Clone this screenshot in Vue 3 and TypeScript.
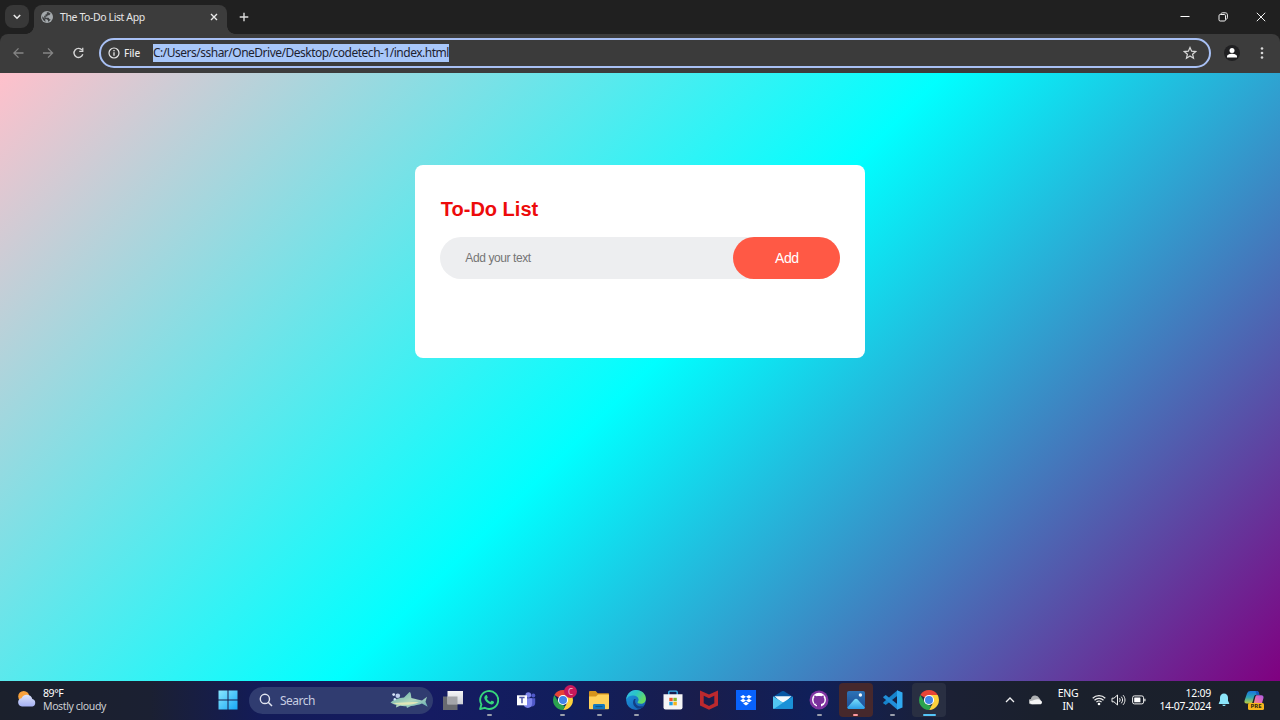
<script setup lang="ts">
import { ref } from 'vue'

const address = 'C:/Users/sshar/OneDrive/Desktop/codetech-1/index.html'
const draft = ref<string>('')
const tasks = ref<string[]>([])

function addTask(): void {
  const text = draft.value.trim()
  if (!text) return
  tasks.value.push(text)
  draft.value = ''
}
</script>

<template>
  <div class="screen">
    <header class="tabstrip">
      <button class="tab-search" aria-label="Search tabs">
        <svg width="24" height="23" viewBox="0 0 24 23"><path d="M8.8 10l3.2 3.2 3.2-3.2" fill="none" stroke="#e8e8e8" stroke-width="1.6" /></svg>
      </button>
      <div class="tab">
        <svg class="globe" width="12" height="12" viewBox="0 0 12 12">
          <circle cx="6" cy="6" r="6" fill="#a4a9ac" />
          <path d="M1.2 5.2l3 2.900v1.300l1 1.200C2.800 10.400 1 8.500 1.200 5.200zM5.800 1.300c1.700-.2 3 .5 3.800 1.500L8.300 4.200H6.700L6.200 5.600H4.600v1.200h3l.9 1.500h1.200C8.900 9.900 7.800 10.500 7 10.700V9.200L5.800 8.200H4.400L3.200 6.500V4.800h1.300V3.300h1.300z" fill="#3f4143" />
        </svg>
        <span class="tab-title">The To-Do List App</span>
        <svg class="tab-close" width="8" height="8" viewBox="0 0 8 8"><path d="M1 1l6 6M7 1L1 7" stroke="#e8e8e8" stroke-width="1.400" /></svg>
      </div>
      <svg class="plus" width="10" height="10" viewBox="0 0 10 10"><path d="M5 .7v8.600M.7 5h8.600" stroke="#dcdcdc" stroke-width="1.400" /></svg>
      <div class="window-controls">
        <svg width="10" height="10" viewBox="0 0 10 10"><path d="M.5 4.500h9" stroke="#fff" stroke-width="1" /></svg>
        <svg width="10" height="10" viewBox="0 0 10 10"><g fill="none" stroke="#f2f2f2"><rect x="1" y="2.500" width="6.500" height="6.500" rx="1.200" /><path d="M3 2.300C3 1.300 3.500.8 4.400.8h3c1.200 0 2 .8 2 2v3c0 .9-.6 1.400-1.500 1.400" /></g></svg>
        <svg width="10" height="10" viewBox="0 0 10 10"><path d="M.8.8l8.400 8.400M9.200.8L.8 9.200" stroke="#f2f2f2" stroke-width="1" /></svg>
      </div>
    </header>

    <nav class="toolbar">
      <svg class="nav-icon" width="12" height="12" viewBox="0 0 12 12"><path d="M11.500 6H1.700M6.500 1.400L1.900 6l4.600 4.600" fill="none" stroke="#858585" stroke-width="1.300" /></svg>
      <svg class="nav-icon" width="12" height="12" viewBox="0 0 12 12"><path d="M1 6h9.500M6 1.400L10.600 6 6 10.600" fill="none" stroke="#858585" stroke-width="1.300" /></svg>
      <svg class="nav-icon" width="12" height="12" viewBox="0 0 12 12"><path d="M10.800 7.300A4.500 4.500 0 1 1 10.100 3.200" fill="none" stroke="#d5d5d5" stroke-width="1.400" /><path d="M11.400.8v4.300H7.200V3.800h2.900V.8z" fill="#d5d5d5" /></svg>
      <div class="omnibox">
        <svg class="info" width="12" height="12" viewBox="0 0 12 12"><circle cx="6" cy="6" r="5" fill="none" stroke="#e8e8e8" stroke-width="1.200" /><path d="M6 5.200v3.500M6 3v1.300" stroke="#e8e8e8" stroke-width="1.300" /></svg>
        <span class="scheme">File</span>
        <span class="url">{{ address }}</span>
        <svg class="star" width="14" height="14" viewBox="0 0 14 14"><path d="M7 1.500l1.650 3.700 4 .35-3.050 2.650.92 3.950L7 10.050l-3.520 2.100.92-3.950L1.350 5.550l4-.35z" fill="none" stroke="#d8d8d8" stroke-width="1.200" /></svg>
      </div>
      <svg class="profile" width="16" height="16" viewBox="0 0 16 16"><circle cx="8" cy="8" r="8" fill="#202022" /><circle cx="8" cy="5.500" r="2.500" fill="#fff" /><path d="M3 12.600v-1.300c0-1.700 3-2.600 5-2.600s5 .9 5 2.600v1.300z" fill="#fff" /></svg>
      <svg class="kebab" width="4" height="14" viewBox="0 0 4 14"><g fill="#d8d8d8"><circle cx="2" cy="2.500" r="1.300" /><circle cx="2" cy="7" r="1.300" /><circle cx="2" cy="11.500" r="1.300" /></g></svg>
    </nav>

    <main class="page">
      <section class="todo-app">
        <h2>To-Do List</h2>
        <div class="row">
          <input v-model="draft" type="text" placeholder="Add your text" @keyup.enter="addTask" />
          <button @click="addTask">Add</button>
        </div>
        <ul v-if="tasks.length">
          <li v-for="(task, i) in tasks" :key="i">{{ task }}</li>
        </ul>
      </section>
    </main>

    <footer class="taskbar">
      <div class="weather">
        <svg width="20" height="18" viewBox="0 0 20 18">
          <defs><linearGradient id="cloud" x1="0" y1="0" x2="0" y2="1"><stop offset="0" stop-color="#dde4fb" /><stop offset="1" stop-color="#a5b0f3" /></linearGradient></defs>
          <circle cx="6.700" cy="6.500" r="5.500" fill="#f7a13c" />
          <path d="M5 16.500a4.200 4.200 0 0 1-.5-8.300 5.700 5.700 0 0 1 10.800.8 3.900 3.900 0 0 1 .2 7.500z" fill="url(#cloud)" />
        </svg>
        <div class="weather-text"><span>89°F</span><span class="dim">Mostly cloudy</span></div>
      </div>

      <svg class="start" width="20" height="20" viewBox="0 0 20 20">
        <defs><linearGradient id="win" x1="0" y1="0" x2="1" y2="1"><stop offset="0" stop-color="#8ae8ff" /><stop offset="1" stop-color="#16a6f5" /></linearGradient></defs>
        <path d="M.5.5h9v9h-9zM10.500.5h9v9h-9zM.5 10.500h9v9h-9zM10.500 10.500h9v9h-9z" fill="url(#win)" />
      </svg>

      <div class="search">
        <svg width="14" height="14" viewBox="0 0 14 14"><circle cx="5.900" cy="5.900" r="4.600" fill="#303c70" stroke="#e1e5f1" stroke-width="1.400" /><path d="M9.200 9.200l3.800 3.800" stroke="#e1e5f1" stroke-width="1.500" /></svg>
        <span>Search</span>
        <svg class="shark" width="38" height="18" viewBox="0 0 38 18">
          <defs><linearGradient id="shark" x1="0" y1="0" x2="1" y2="1"><stop offset="0" stop-color="#59a7a3" /><stop offset=".55" stop-color="#afd6be" /><stop offset="1" stop-color="#5faab4" /></linearGradient></defs>
          <path d="M.5 11.500c3-3 8-4.900 13.500-5L19.500 1c1.400 0 1.600 3.500 1.900 5.900 4.600.8 7.900 2.100 10.600 2.600l5-3.700-1.500 5 2.200 5-5.700-3.300c-3.500 1.300-7 2.200-11 2.500l-4 2-.6-1.800c-2.200.1-4.300 0-6.300-.4L6 16.500l.4-2.600C4 13.500 2.200 12.700.5 11.500z" fill="url(#shark)" />
          <path d="M3 12c7 .3 15-1.700 26-.7-5 2.200-10 2.700-16 2.500-4 0-7.500-.6-10-1.800z" fill="#e0e6b7" />
          <circle cx="4.800" cy="8.300" r="1.200" fill="#cde7fa" /><circle cx="7.800" cy="4.700" r="2.300" fill="#bfcdec" /><circle cx="3.700" cy="3.600" r="1.400" fill="#d8e6fa" />
        </svg>
      </div>

      <div class="apps">
        <div class="app">
          <svg viewBox="0 0 20 20"><defs><linearGradient id="tv" x1="0" y1="0" x2="0" y2="1"><stop offset="0" stop-color="#f5f5f7" /><stop offset="1" stop-color="#cbcdd5" /></linearGradient></defs><path d="M0 6.500h14.500V20H0z" fill="#686a70" /><path d="M4.500 1H20v13.300H4.500z" fill="url(#tv)" /><path d="M4.500 6.500h10v7.800h-10z" fill="#a3a4a9" /></svg>
        </div>
        <div class="app">
          <svg viewBox="0 0 20 20"><path d="M1.100 19l1.300-4.500A9 9 0 1 1 5.700 17.800z" fill="none" stroke="#36d67b" stroke-width="1.900" stroke-linejoin="round" /><path d="M6.800 5.200c.4-.2 1-.1 1.200.3l.7 1.700c.1.300 0 .6-.2.900l-.6.7c.8 1.500 1.800 2.400 3.400 3.100l.9-1c.2-.3.500-.3.800-.2l1.700.9c.4.200.4.500.3.900-.3 1.300-1.500 2-2.700 1.900-3.400-.4-6.600-3.500-7-6.300-.1-1.200.5-2.300 1.500-2.900z" fill="#36d67b" /></svg><i />
        </div>
        <div class="app">
          <svg viewBox="0 0 20 20"><circle cx="12.300" cy="5" r="2.800" fill="#7b83eb" /><circle cx="17.300" cy="5.600" r="2" fill="#5059c9" /><path d="M13.500 8.300h5.700v4.800c0 2-1.300 3.400-3.400 3.400h-2.300z" fill="#5059c9" /><path d="M7.500 8.300h8.600v5.200c0 2.500-1.700 4.400-4.300 4.400s-4.300-1.900-4.300-4.400z" fill="#7b83eb" /><path d="M1 5.300h10v10H1z" fill="#fff" /><path d="M3.300 7.600h5.300M6 7.600v5.600" stroke="#4c55a8" stroke-width="1.500" /></svg>
        </div>
        <div class="app">
          <svg viewBox="0 0 20 20"><path d="M10 10L1.340 5A10 10 0 0 1 18.660 5z" fill="#e84436" /><path d="M10 10V5h8.660A10 10 0 0 1 10 20l4.330-7.500z" fill="#fdd13b" /><path d="M1.340 5l4.330 7.500L10 15l2 1.500L10 20A10 10 0 0 1 1.340 5z" fill="#2ba34f" /><circle cx="10" cy="10" r="5.100" fill="#fff" /><circle cx="10" cy="10" r="4" fill="#4285e8" /></svg>
          <b class="badge">C</b><i />
        </div>
        <div class="app">
          <svg viewBox="0 0 20 20"><path d="M0 2.200c0-.7.5-1.200 1.200-1.200h5.500l2 2.200H19c.6 0 1 .4 1 1V10H0z" fill="#d6941c" /><path d="M0 6.500h7l2-2h10c.6 0 1 .4 1 1v12.700c0 .6-.4 1-1 1H1c-.6 0-1-.4-1-1z" fill="#ffd15a" /><path d="M4 19v-3.500c0-1 .6-1.500 1.500-1.500h9c.9 0 1.500.5 1.500 1.500V19z" fill="#1579bf" /><path d="M6.500 16.500h7" stroke="#0b588e" stroke-width="1.200" /></svg><i />
        </div>
        <div class="app">
          <svg viewBox="0 0 20 20"><defs><linearGradient id="edgeTop" x1="0" y1="0" x2="1" y2=".5"><stop offset="0" stop-color="#36b9ed" /><stop offset=".5" stop-color="#2ac6c5" /><stop offset="1" stop-color="#68db62" /></linearGradient><linearGradient id="edgeLow" x1="0" y1="0" x2="1" y2="1"><stop offset="0" stop-color="#1b9de2" /><stop offset="1" stop-color="#1657ae" /></linearGradient></defs><circle cx="10" cy="10" r="9.900" fill="url(#edgeLow)" /><path d="M.1 9.600C.8 4 4.800.1 10 .1c5.800 0 9.900 4 9.900 8.700 0 3.100-2.300 5-5 5-2.300 0-3.800-.9-3.300-1.700.9-1.200 1.100-2 .9-3C12 6.900 10 5.600 7.200 5.500 4 5.400 1.300 7 .1 9.600z" fill="url(#edgeTop)" /><path d="M8.200 9c-2 2.500-1.300 7 2.300 8.900 3 1.300 6.300.2 8.200-2.500-4 1.900-8.400.7-9.400-3-.3-1.300-.1-2.300.5-3.300z" fill="#123f86" /></svg><i />
        </div>
        <div class="app">
          <svg viewBox="0 0 20 20"><path d="M5.800 5V2.200c0-.7.4-1.100 1-1.100h6.400c.6 0 1 .4 1 1.100V5" fill="none" stroke="#36b4ee" stroke-width="1.400" /><path d="M.5 4.200h19v13.300a2 2 0 0 1-2 2h-15a2 2 0 0 1-2-2z" fill="#f5f5f6" /><path d="M6.300 7.800h3.400v3.400H6.300z" fill="#ef5428" /><path d="M10.400 7.800h3.400v3.400h-3.400z" fill="#83b82d" /><path d="M6.300 11.900h3.400v3.400H6.300z" fill="#20a2e2" /><path d="M10.400 11.900h3.400v3.400h-3.400z" fill="#f6b51c" /></svg>
        </div>
        <div class="app">
          <svg viewBox="0 0 20 20"><path d="M1 .4l9 4.200L19 .4v15L10 19.800 1 15.400zM4.700 5.700v7.500L10 16l5.300-2.800V5.700L10 8.300z" fill="#bc292e" fill-rule="evenodd" /></svg>
        </div>
        <div class="app">
          <svg viewBox="0 0 20 20"><path d="M0 0h20v20H0z" fill="#0862fb" /><path d="M7.100 5l2.900 1.850-2.900 1.850-2.900-1.850zM12.900 5l2.900 1.850-2.900 1.850L10 6.850zM7.100 8.700L10 10.550 7.100 12.400l-2.900-1.850zM12.900 8.700l2.900 1.850-2.900 1.850L10 10.550zM10 11.700l2.900 1.850L10 15.400l-2.900-1.850z" fill="#fff" /></svg>
        </div>
        <div class="app">
          <svg viewBox="0 0 20 20"><path d="M0 6.700L9 1.200c.7-.4 1.300-.4 2 0l9 5.500-10 7z" fill="#0757a4" /><path d="M1.500 6.300h17L10 14z" fill="#f4f9fd" /><path d="M0 6.500l20 12.300H1c-.6 0-1-.4-1-1z" fill="#2ca6e6" /><path d="M20 6.500v11.300c0 .6-.4 1-1 1H1L10 12.600z" fill="#1a91d7" /><path d="M0 6.500l10 6.200-9 6.100c-.6 0-1-.4-1-1z" fill="#52c6f1" /></svg>
        </div>
        <div class="app">
          <svg viewBox="0 0 20 20"><circle cx="10" cy="10" r="9.500" fill="#8034a2" /><circle cx="10" cy="9.800" r="7" fill="#fff" /><path d="M8 17v-3.100c-2.500-.4-3.500-1.600-3.500-4 0-.9.300-1.700.8-2.300-.2-.6-.2-1.400.1-2.200.8 0 1.600.4 2.300.9 1.500-.4 3.100-.4 4.600 0 .7-.5 1.500-.9 2.300-.9.300.8.300 1.600.1 2.200.5.600.8 1.400.8 2.300 0 2.400-1 3.600-3.500 4V17z" fill="#7a309c" /><path d="M5 12.700c1.400 0 1.100 1.800 3 1.800" fill="none" stroke="#7a309c" /></svg><i />
        </div>
        <div class="app photos">
          <svg viewBox="0 0 20 20"><defs><linearGradient id="ph" x1="0" y1="0" x2="0" y2="1"><stop offset="0" stop-color="#2c72b6" /><stop offset="1" stop-color="#1c4c94" /></linearGradient><linearGradient id="hill" x1="0" y1="0" x2="0" y2="1"><stop offset="0" stop-color="#7de0fb" /><stop offset="1" stop-color="#2a9ce7" /></linearGradient></defs><rect x="1" y="1" width="18" height="18" rx="2" fill="url(#ph)" /><path d="M1.300 17.500L8.600 9.300c.8-.9 2-.9 2.800 0l7.500 8.200c-.2 1-.9 1.500-1.900 1.500H3c-1 0-1.600-.6-1.700-1.500z" fill="url(#hill)" /><circle cx="14.400" cy="5" r="1.700" fill="#f3faff" /></svg><i />
        </div>
        <div class="app">
          <svg viewBox="0 0 20 20"><path d="M14.500.3v5.500L2.700 15 .4 13.200c-.3-.3-.3-.7 0-1z" fill="#1683cc" /><path d="M14.500 19.700v-5.500L2.700 5 .4 6.800c-.3.300-.3.700 0 1z" fill="#218fd9" /><path d="M14 .3l5.500 2.300v14.800L14 19.700z" fill="#30a9f0" /></svg><i />
        </div>
        <div class="app active">
          <svg viewBox="0 0 20 20"><path d="M10 10L1.340 5A10 10 0 0 1 18.660 5z" fill="#e84436" /><path d="M10 10V5h8.660A10 10 0 0 1 10 20l4.330-7.500z" fill="#fdd13b" /><path d="M1.340 5l4.330 7.500L10 15l2 1.500L10 20A10 10 0 0 1 1.340 5z" fill="#2ba34f" /><circle cx="10" cy="10" r="5.100" fill="#fff" /><circle cx="10" cy="10" r="4" fill="#4285e8" /></svg><i />
        </div>
      </div>

      <div class="tray">
        <svg class="chevron" width="10" height="8" viewBox="0 0 10 8"><path d="M1 6l4-4 4 4" fill="none" stroke="#f0f0f2" stroke-width="1.300" /></svg>
        <svg class="onedrive" width="14" height="10" viewBox="0 0 14 10"><path d="M2.500 9.200a2.500 2.500 0 0 1-.6-5.300A4.400 4.400 0 0 1 10.200 3l2.500 3.500L10 9z" fill="#aeb0b3" /><path d="M3 9.200a2.400 2.400 0 0 1-1.900-3.100C4 5.800 6.900 3.800 9.300 4.200c1.200.2 1.900.9 2.200 1.500A1.800 1.800 0 0 1 11.700 9.200z" fill="#f4f4f5" /></svg>
        <div class="language"><span>ENG</span><span>IN</span></div>
        <svg class="wifi" width="14" height="12" viewBox="0 0 14 12"><g fill="none" stroke="#eee" stroke-width="1.200"><path d="M.7 4.200a9 9 0 0 1 12.600 0M2.500 6.200a6.400 6.400 0 0 1 9 0M4.400 8.100a3.700 3.700 0 0 1 5.200 0" /></g><circle cx="7" cy="10" r="1.300" fill="#fff" /></svg>
        <svg class="volume" width="15" height="12" viewBox="0 0 15 12"><g fill="none" stroke="#f0f0f0"><path d="M1 4.200h2L6.500 1v10L3 7.800H1zM8.500 4.200c.8 1 .8 2.600 0 3.600M10.300 2.700c1.700 1.900 1.700 4.700 0 6.600M12.100 1.200c2.500 2.700 2.500 6.900 0 9.600" /></g></svg>
        <svg class="battery" width="14" height="10" viewBox="0 0 14 10"><rect x=".6" y=".9" width="11" height="8" rx="1.800" fill="none" stroke="#eee" /><rect x="2.200" y="2.500" width="6.200" height="4.800" rx=".4" fill="#fff" /><path d="M12.900 3.700v2.600" stroke="#eee" stroke-width="1.200" /></svg>
        <div class="clock"><span>12:09</span><span class="date">14-07-2024</span></div>
        <svg class="bell" width="12" height="14" viewBox="0 0 12 14"><path d="M6 .6c2.300 0 4 1.800 4 4.100v3l1.200 2.500c.2.400 0 .8-.5.800H1.300c-.5 0-.7-.4-.5-.8L2 7.700v-3C2 2.400 3.700.6 6 .6zM4.200 11.700h3.600c-.3.900-1 1.400-1.800 1.400s-1.500-.5-1.800-1.400z" fill="#8ce5fa" /></svg>
        <div class="copilot">
          <svg width="20" height="17" viewBox="0 0 20 17"><defs><linearGradient id="cpA" x1="0" y1="0" x2="0" y2="1"><stop offset="0" stop-color="#1876dd" /><stop offset=".5" stop-color="#2ea6b4" /><stop offset="1" stop-color="#c4cf38" /></linearGradient><linearGradient id="cpB" x1="1" y1="0" x2="0" y2="1"><stop offset="0" stop-color="#a95be8" /><stop offset=".5" stop-color="#e56bb5" /><stop offset="1" stop-color="#f89b69" /></linearGradient></defs><path d="M6.500 1h6c1.500 0 2 .9 2.400 2l.5 1.700h-3c-1.300 0-2 .8-2.400 2L8.500 12c-.4 1.200-1.100 1.600-2.300 1.600H2.700C.7 13.600.1 12.300.6 10.500L3 3.500C3.600 1.800 4.800 1 6.500 1z" fill="url(#cpA)" /><path d="M11.500 1h1c1.500 0 2 .9 2.400 2l.5 1.700h-2.800z" fill="#1558c1" /><path d="M12.700 5.200h4.600c2 0 2.600 1.400 2.100 3.100L17.500 15H9.300l2-7.900c.3-1.100.7-1.700 1.400-1.900z" fill="url(#cpB)" /></svg>
          <b>PRE</b>
        </div>
      </div>
    </footer>
  </div>
</template>

<style>
html, body { margin: 0; overflow: hidden; }
</style>

<style scoped>
* { box-sizing: border-box; }
svg { display: block; flex: none; }
button, input { border: 0; outline: 0; padding: 0; margin: 0; }
.screen { width: 1280px; height: 720px; display: flex; flex-direction: column; overflow: hidden; font-family: "Noto Sans", "Open Sans", sans-serif; background: #202020; }

.tabstrip { height: 33.500px; flex: none; background: #202020; display: flex; align-items: flex-start; position: relative; z-index: 1; }
.tab-search { width: 24px; height: 23px; margin: 5px 0 0 5px; border-radius: 8px; background: #383838; flex: none; }
.tab { position: relative; width: 193px; height: 29px; margin: 5px 0 0 5px; padding: 0 9px 5px 7px; border-radius: 8px 8px 0 0; background: #3c3c3c; display: flex; align-items: center; }
.tab::before, .tab::after { content: ""; position: absolute; bottom: 0; width: 8px; height: 8px; }
.tab::before { left: -8px; background: radial-gradient(circle at 0 0, transparent 7.500px, #3c3c3c 8px); }
.tab::after { right: -8px; background: radial-gradient(circle at 100% 0, transparent 7.500px, #3c3c3c 8px); }
.tab-title { margin-left: 7px; font-size: 10.500px; letter-spacing: -0.4px; line-height: 14px; color: #e6e6e6; white-space: nowrap; }
.tab-close { margin-left: auto; }
.plus { margin: 12px 0 0 11.500px; }
.window-controls { margin: 12px 14px 0 auto; display: flex; gap: 28.500px; }
.window-controls svg:nth-child(2) { margin-left: -1px; }

.toolbar { height: 39px; flex: none; display: flex; align-items: center; background: #3c3c3c; border-radius: 8px 8px 0 0; padding: 0 16px 0 12px; }
.nav-icon { margin-right: 18px; }
.omnibox { width: 1112px; height: 30px; margin-left: -3px; border: 2px solid #a8c0f4; border-radius: 15px; background: #3b3b3b; display: flex; align-items: center; padding: 0 12px 0 7px; }
.scheme { margin-left: 4px; width: 29px; font-size: 10px; font-weight: 500; letter-spacing: -0.1px; color: #e9e9e9; }
.url { height: 18px; line-height: 18px; background: #a8c7fa; color: #1d2230; font-size: 12px; letter-spacing: -0.5px; white-space: nowrap; }
.star { margin-left: auto; }
.profile { margin-left: 13px; }
.kebab { margin-left: auto; }

.page { height: 608px; flex: none; background: linear-gradient(135deg, pink, cyan, purple); display: flex; justify-content: center; align-items: flex-start; padding-top: 92.500px; }
.todo-app { width: 450px; height: 193px; margin-left: 0.6px; border-radius: 8px; background: #fff; padding: 32px 25px 0; font-family: "Liberation Sans", Arial, sans-serif; }
h2 { margin: 0 0 16.300px 0.500px; font-size: 20px; line-height: 24px; color: #ed0b0b; }
.row { height: 42px; display: flex; background: #edeef0; border-radius: 21px; }
.row input { flex: 1; min-width: 0; background: transparent; padding: 0 0 0 25px; font: 12px "Liberation Sans", Arial, sans-serif; letter-spacing: -0.4px; }
.row input::placeholder { color: #757575; opacity: 1; }
.row button { width: 107px; padding-bottom: 1px; border-radius: 21px; background: #ff5945; color: #fff; font: 14px "Liberation Sans", Arial, sans-serif; letter-spacing: -0.4px; }
ul { margin: 12px 0 0; padding-left: 25px; font-size: 12px; }

.taskbar { height: 39.500px; flex: none; display: flex; align-items: center; background: linear-gradient(90deg, #1b202c 0, #1b2032 150px, #131b58 260px, #151b62 430px, #111e5c 570px, #191d4c 700px, #101f59 810px, #1b2034 950px, #1a202c 1050px, #1b202b 100%); }
.weather { width: 202px; margin-right: 16px; padding-left: 17px; display: flex; align-items: center; flex: none; }
.weather svg { margin-top: -3px; }
.weather-text { margin-left: 6px; display: flex; flex-direction: column; font-size: 10.500px; line-height: 13px; color: #fff; letter-spacing: -0.4px; white-space: nowrap; }
.dim { color: #ccced2; letter-spacing: -0.38px; }
.start { flex: none; }
.search { width: 184px; height: 27px; margin: 0 1.500px 0 11px; border-radius: 14px; background: #303c70; display: flex; align-items: center; padding: 0 5px 0 10px; flex: none; }
.search span { margin-left: 7px; font-size: 12px; letter-spacing: -0.5px; color: #c7cde1; }
.shark { margin-left: auto; }
.apps { display: flex; flex: none; }
.app { position: relative; width: 36.650px; height: 34px; display: flex; align-items: center; justify-content: center; }
.app svg { width: 20px; height: 20px; position: relative; }
.app i { position: absolute; bottom: 1px; left: 50%; width: 5px; height: 2.500px; margin-left: -2.500px; border-radius: 2px; background: #9a9fac; }
.photos::before, .active::before { content: ""; position: absolute; inset: 0 1.500px; border-radius: 4px; background: #46282c; }
.photos i { background: #ff99a0; }
.active::before { background: #292f42; }
.active i { width: 13px; margin-left: -6.500px; background: #55c5f8; }
.badge { position: absolute; left: 19.500px; top: 2px; width: 13px; height: 13px; border-radius: 50%; background: #c7185b; color: #f1bdd0; font-size: 8px; line-height: 13px; text-align: center; font-weight: 400; }

.tray { margin-left: auto; padding-right: 16px; display: flex; align-items: center; color: #fff; font-size: 10.500px; line-height: 13px; letter-spacing: -0.25px; flex: none; }
.chevron { margin-right: 14.500px; }
.onedrive { margin-right: 13px; }
.language { width: 24px; display: flex; flex-direction: column; align-items: center; }
.wifi { margin-left: 11.500px; }
.volume { margin-left: 5.500px; }
.battery { margin-left: 5.500px; }
.clock { width: 55px; margin-left: 10.500px; display: flex; flex-direction: column; align-items: flex-end; white-space: nowrap; }
.date { letter-spacing: -0.32px; }
.bell { margin-left: 6.500px; }
.copilot { position: relative; margin-left: 14.500px; width: 20px; height: 20px; }
.copilot b { position: absolute; left: 4px; top: 12.500px; width: 16px; height: 7px; border-radius: 1.500px; background: #f6b51c; color: #2c2410; font-size: 6px; line-height: 7px; text-align: center; letter-spacing: 0; }
</style>
